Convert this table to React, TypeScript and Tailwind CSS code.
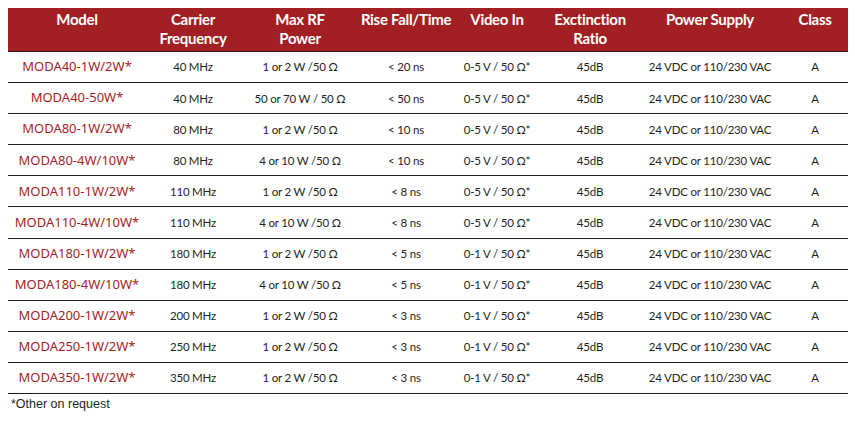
const rows = [
  ["MODA40-1W/2W*", "40 MHz", "1 or 2 W /50 Ω", "< 20 ns", "0-5 V / 50 Ω*"],
  ["MODA40-50W*", "40 MHz", "50 or 70 W / 50 Ω", "< 50 ns", "0-5 V / 50 Ω*"],
  ["MODA80-1W/2W*", "80 MHz", "1 or 2 W /50 Ω", "< 10 ns", "0-5 V / 50 Ω*"],
  ["MODA80-4W/10W*", "80 MHz", "4 or 10 W /50 Ω", "< 10 ns", "0-5 V / 50 Ω*"],
  ["MODA110-1W/2W*", "110 MHz", "1 or 2 W /50 Ω", "< 8 ns", "0-5 V / 50 Ω*"],
  ["MODA110-4W/10W*", "110 MHz", "4 or 10 W /50 Ω", "< 8 ns", "0-5 V / 50 Ω*"],
  ["MODA180-1W/2W*", "180 MHz", "1 or 2 W /50 Ω", "< 5 ns", "0-1 V / 50 Ω*"],
  ["MODA180-4W/10W*", "180 MHz", "4 or 10 W /50 Ω", "< 5 ns", "0-1 V / 50 Ω*"],
  ["MODA200-1W/2W*", "200 MHz", "1 or 2 W /50 Ω", "< 3 ns", "0-1 V / 50 Ω*"],
  ["MODA250-1W/2W*", "250 MHz", "1 or 2 W /50 Ω", "< 3 ns", "0-1 V / 50 Ω*"],
  ["MODA350-1W/2W*", "350 MHz", "1 or 2 W /50 Ω", "< 3 ns", "0-1 V / 50 Ω*"],
];

const cols = "grid grid-cols-[138px_94px_120px_92px_90px_96px_144px_66px]";

export default function App() {
  return (
    <div className="w-[855px] h-[430px] bg-white pt-2 pl-2 font-['Lato',_'Open_Sans',_sans-serif]">
      <div className="w-[840px]">
        <div className={`${cols} h-[44px] bg-[#a21f24] border-b border-[#231f20] text-white font-bold text-[15px] leading-[19px] tracking-[-0.3px] whitespace-nowrap text-center items-start pt-[2px]`}>
          <div>Model</div>
          <div>Carrier<br />Frequency</div>
          <div>Max RF<br />Power</div>
          <div>Rise Fall/Time</div>
          <div>Video In</div>
          <div>Exctinction<br />Ratio</div>
          <div>Power Supply</div>
          <div>Class</div>
        </div>
        {rows.map((r) => (
          <div
            key={r[0]}
            className={`${cols} h-[31.1px] border-b border-[#231f20] items-center text-center text-[11.5px] text-[#231f20] tracking-[-0.2px] whitespace-nowrap`}
          >
            <div className="text-[13px] text-[#a51e24] tracking-normal font-['Noto_Sans',_sans-serif]">{r[0]}</div>
            <div>{r[1]}</div>
            <div>{r[2]}</div>
            <div>{r[3]}</div>
            <div>{r[4]}</div>
            <div>45dB</div>
            <div>24 VDC or 110/230 VAC</div>
            <div>A</div>
          </div>
        ))}
        <div className="pl-[3px] pt-[1px] text-[12.5px] text-[#231f20] font-['Liberation_Sans',_sans-serif]">*Other on request</div>
      </div>
    </div>
  );
}
